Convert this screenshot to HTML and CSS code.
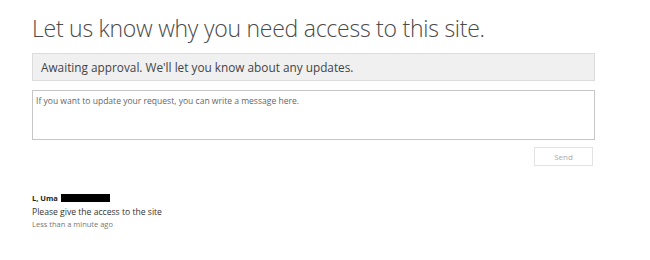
FILE: index.html
```html
<!DOCTYPE html>
<html>
<head>
<meta charset="utf-8">
<link rel="stylesheet" href="styles.css">
</head>
<body>
<div class="page">
  <h1 class="title">Let us know why you need access to this site.</h1>
  <div class="status">Awaiting approval. We'll let you know about any updates.</div>
  <div class="message-box">If you want to update your request, you can write a message here.</div>
  <div class="actions">
    <button class="send">Send</button>
  </div>
  <div class="history">
    <div class="author"><span class="name">L, Uma</span><span class="redact"></span></div>
    <div class="text">Please give the access to the site</div>
    <div class="time">Less than a minute ago</div>
  </div>
</div>
</body>
</html>
```
FILE: styles.css
```css
html, body {
  margin: 0;
  padding: 0;
  background: #ffffff;
}
body {
  font-family: "Open Sans", "Liberation Sans", sans-serif;
  color: #444444;
}
.page {
  width: 563px;
  padding: 12px 0 0 32px;
}
.title {
  margin: 0;
  font-weight: 300;
  font-size: 23px;
  line-height: 32px;
  color: #4a4a4a;
  letter-spacing: -0.25px;
}
.status {
  margin-top: 9px;
  height: 26px;
  line-height: 26px;
  background: #f0f0f0;
  border: 1px solid #dcdcdc;
  padding-left: 8px;
  font-size: 11.8px;
  color: #444444;
}
.message-box {
  box-sizing: border-box;
  margin-top: 9px;
  height: 50px;
  border: 1px solid #c6c6c6;
  padding: 4px 3px;
  font-size: 8.55px;
  color: #666666;
}
.actions {
  display: flex;
  justify-content: flex-end;
  margin-top: 7px;
  padding-right: 2px;
}
.send {
  width: 59px;
  height: 19px;
  border: 1px solid #e3e3e3;
  background: #ffffff;
  font-family: inherit;
  font-size: 8px;
  color: #aaaaaa;
  padding: 0;
}
.history {
  margin-top: 27px;
  font-size: 8px;
}
.author {
  font-weight: 700;
  font-size: 7.5px;
  color: #222222;
  line-height: 10px;
  display: flex;
  align-items: center;
  gap: 3px;
}
.redact {
  display: inline-block;
  width: 49px;
  height: 8px;
  background: #000000;
}
.text {
  margin-top: 3px;
  font-size: 8.6px;
  line-height: 12px;
  color: #333333;
}
.time {
  margin-top: 1px;
  font-size: 7.5px;
  line-height: 10px;
  color: #777777;
}
```
